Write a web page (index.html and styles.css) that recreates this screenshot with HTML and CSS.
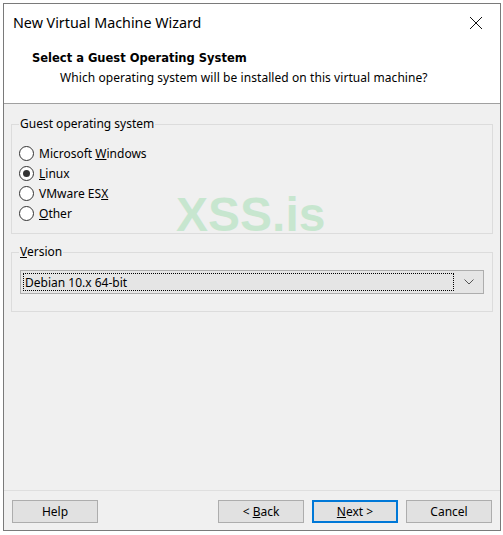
FILE: index.html
```html
<!DOCTYPE html>
<html>
<head>
<meta charset="utf-8">
<link rel="stylesheet" href="styles.css">
</head>
<body>
<div class="window">
  <div class="header">
    <div class="titlebar">
      <span class="title">New Virtual Machine Wizard</span>
      <svg class="close" width="14" height="14" viewBox="0 0 14 14"><path d="M1 1 L13 13 M13 1 L1 13" stroke="#111" stroke-width="1" fill="none"/></svg>
    </div>
    <div class="heading">Select a Guest Operating System</div>
    <div class="subtext">Which operating system will be installed on this virtual machine?</div>
  </div>
  <div class="content">
    <fieldset class="group group-os">
      <legend>Guest operating system</legend>
      <div class="radio"><span class="dot"></span><span>Microsoft <u>W</u>indows</span></div>
      <div class="radio checked"><span class="dot"></span><span><u>L</u>inux</span></div>
      <div class="radio"><span class="dot"></span><span>VMware ES<u>X</u></span></div>
      <div class="radio"><span class="dot"></span><span><u>O</u>ther</span></div>
    </fieldset>
    <fieldset class="group group-ver">
      <legend><u>V</u>ersion</legend>
      <div class="select">
        <span class="select-value">Debian 10.x 64-bit</span>
        <svg class="chev" width="10" height="6" viewBox="0 0 10 6"><path d="M0.5 0.5 L5 5 L9.5 0.5" stroke="#555" stroke-width="1" fill="none"/></svg>
      </div>
    </fieldset>
    <div class="watermark">XSS.is</div>
  </div>
  <div class="footer">
    <button class="btn">Help</button>
    <div class="spacer"></div>
    <button class="btn">&lt; <u>B</u>ack</button>
    <button class="btn primary"><u>N</u>ext &gt;</button>
    <button class="btn">Cancel</button>
  </div>
</div>
</body>
</html>
```
FILE: styles.css
```css
html, body {
  margin: 0;
  padding: 0;
  background: #ffffff;
}
body {
  font-family: "Noto Sans", "Open Sans", sans-serif;
  font-size: 12px;
  color: #000;
}
.window {
  margin: 3px 0 0 3px;
  width: 498px;
  height: 528px;
  box-sizing: border-box;
  border: 1px solid #7a7a7a;
  background: #f0f0f0;
  display: flex;
  flex-direction: column;
  position: relative;
}
.header {
  background: #ffffff;
  border-bottom: 1px solid #a0a0a0;
  height: 100px;
  box-sizing: border-box;
}
.titlebar {
  height: 37px;
  display: flex;
  align-items: center;
  justify-content: space-between;
  padding: 0 17px 0 9px;
}
.title {
  font-size: 14.3px;
  color: #000;
}
.heading {
  margin-top: 9px;
  padding-left: 28px;
  font-family: "DejaVu Sans", sans-serif;
  font-weight: bold;
  font-size: 11.5px;
  line-height: 16px;
}
.subtext {
  margin-top: 4px;
  padding-left: 56px;
  line-height: 16px;
  letter-spacing: 0.07px;
}
.content {
  flex: 1;
  padding: 12px 7px 0 7px;
  position: relative;
}
.group {
  margin: 0;
  border: 1px solid #dcdcdc;
  padding: 0 8px;
  min-width: 0;
}
.group legend {
  padding: 0 1px;
  line-height: 16px;
  margin-left: -1px;
}
.group-os {
  padding-top: 11px;
  padding-bottom: 10px;
}
.group-ver {
  margin-top: 10px;
  padding-top: 10px;
  padding-bottom: 17px;
}
.radio {
  display: flex;
  align-items: center;
  height: 20px;
  gap: 5px;
  margin-left: -1px;
}
.dot {
  width: 13px;
  height: 13px;
  border: 1px solid #333;
  border-radius: 50%;
  background: #fff;
  position: relative;
  flex: none;
}
.checked .dot::after {
  content: "";
  position: absolute;
  left: 3px;
  top: 3px;
  width: 7px;
  height: 7px;
  border-radius: 50%;
  background: #333;
}
.select {
  height: 24px;
  box-sizing: border-box;
  border: 1px solid #adadad;
  background: #e5e5e5;
  display: flex;
  align-items: center;
  padding: 2px 9px 2px 2px;
  gap: 10px;
}
.select-value {
  flex: 1;
  height: 18px;
  line-height: 18px;
  border: 1px dotted #000;
  box-sizing: border-box;
  padding-left: 1px;
}
.chev {
  flex: none;
}
.watermark {
  position: absolute;
  left: 172px;
  top: 87px;
  font-family: "Liberation Sans", sans-serif;
  font-weight: bold;
  font-size: 48px;
  color: #3cc45c;
  opacity: 0.22;
  line-height: 1;
}
.footer {
  border-top: 1px solid #dfdfdf;
  display: flex;
  gap: 8px;
  padding: 9px 8px 7px 8px;
}
.spacer {
  flex: 1;
}
.btn {
  width: 86px;
  height: 23px;
  box-sizing: border-box;
  border: 1px solid #adadad;
  background: #e1e1e1;
  font-family: inherit;
  font-size: 12px;
  color: #000;
  padding: 0;
  margin: 0;
}
.btn.primary {
  border: 2px solid #0078d7;
}
```
